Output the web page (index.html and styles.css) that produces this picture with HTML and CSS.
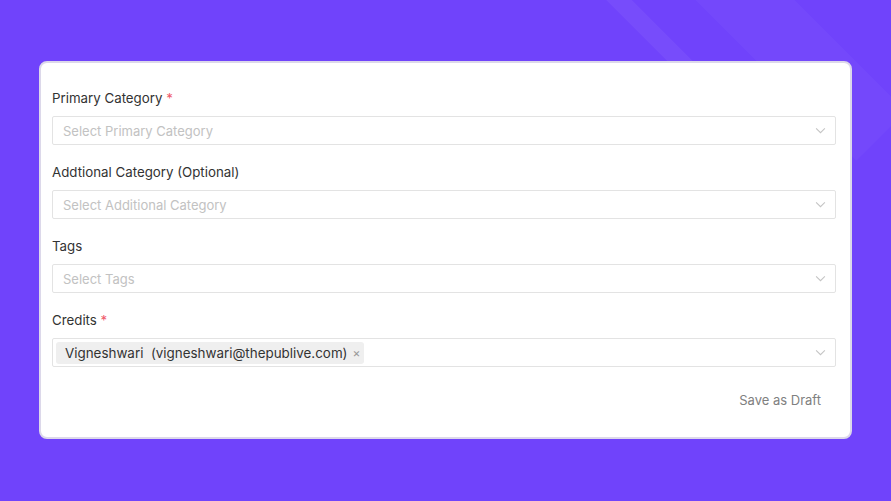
FILE: index.html
```html
<!DOCTYPE html>
<html>
<head>
<meta charset="utf-8">
<link rel="stylesheet" href="styles.css">
</head>
<body>
<div class="bg-deco"><span class="stripe s1"></span><span class="stripe s2"></span></div>
<main class="page">
  <form class="card">
    <div class="field">
      <label class="label">Primary Category <span class="req">*</span></label>
      <div class="select"><span class="ph">Select Primary Category</span><svg class="chev" viewBox="0 0 12 8"><path d="M1 1.5 6 6.5 11 1.5" fill="none" stroke="#c4c4c4" stroke-width="1.2"/></svg></div>
    </div>
    <div class="field">
      <label class="label">Addtional Category (Optional)</label>
      <div class="select"><span class="ph">Select Additional Category</span><svg class="chev" viewBox="0 0 12 8"><path d="M1 1.5 6 6.5 11 1.5" fill="none" stroke="#c4c4c4" stroke-width="1.2"/></svg></div>
    </div>
    <div class="field">
      <label class="label">Tags</label>
      <div class="select"><span class="ph">Select Tags</span><svg class="chev" viewBox="0 0 12 8"><path d="M1 1.5 6 6.5 11 1.5" fill="none" stroke="#c4c4c4" stroke-width="1.2"/></svg></div>
    </div>
    <div class="field">
      <label class="label">Credits <span class="req">*</span></label>
      <div class="select multi"><span class="chip">Vigneshwari&nbsp; (vigneshwari@thepublive.com)<span class="x">×</span></span><svg class="chev" viewBox="0 0 12 8"><path d="M1 1.5 6 6.5 11 1.5" fill="none" stroke="#c4c4c4" stroke-width="1.2"/></svg></div>
    </div>
    <div class="actions"><button type="button" class="draft">Save as Draft</button></div>
  </form>
</main>
</body>
</html>
```

FILE: styles.css
```css
html, body { margin: 0; padding: 0; }
body {
  width: 891px; height: 501px; overflow: hidden;
  background: #7043fb;
  font-family: "Inter", "Open Sans", sans-serif;
  position: relative;
}
.bg-deco { position: absolute; inset: 0; overflow: hidden; pointer-events: none; }
.stripe {
  position: absolute; display: block; width: 40px; height: 300px;
  background: rgba(255,255,255,0.05);
  transform: rotate(-45deg);
}
.s1 { left: 620px; top: -140px; width: 18px; }
.s2 { left: 740px; top: -120px; width: 70px; background: rgba(255,255,255,0.03); }
.page { position: relative; padding: 61px 39px 0 39px; }
.card {
  box-sizing: border-box;
  width: 813px; height: 378px;
  background: #fff;
  border: 2px solid #dcd8ea;
  border-radius: 8px;
  padding: 27px 14px 0 11px;
  display: flex; flex-direction: column; gap: 19px;
}
.field { display: flex; flex-direction: column; gap: 9px; }
.label { font-size: 13.3px; color: #333; line-height: 17px; display: block; }
.req { color: #ef5b6b; }
.select {
  box-sizing: border-box; height: 29px;
  border: 1px solid #e3e3e3; border-radius: 2px;
  display: flex; align-items: center; justify-content: space-between;
  padding: 0 9px 0 10px;
}
.ph { font-size: 13px; color: #c2c2c2; }
.chev { width: 11px; height: 7px; }
.multi { padding-left: 3px; }
.chip {
  background: #efefef; border-radius: 3px;
  font-size: 13.4px; color: #333; height: 22px; line-height: 22px;
  padding: 0 4px 0 9px; display: inline-flex; align-items: center;
}
.x { color: #999; font-size: 12px; margin-left: 5px; }
.actions { display: flex; justify-content: flex-end; margin-top: 0; }
.draft {
  background: none; border: none; font-family: inherit;
  font-size: 13px; color: #808080; padding: 6px 15px; cursor: pointer;
}
```
